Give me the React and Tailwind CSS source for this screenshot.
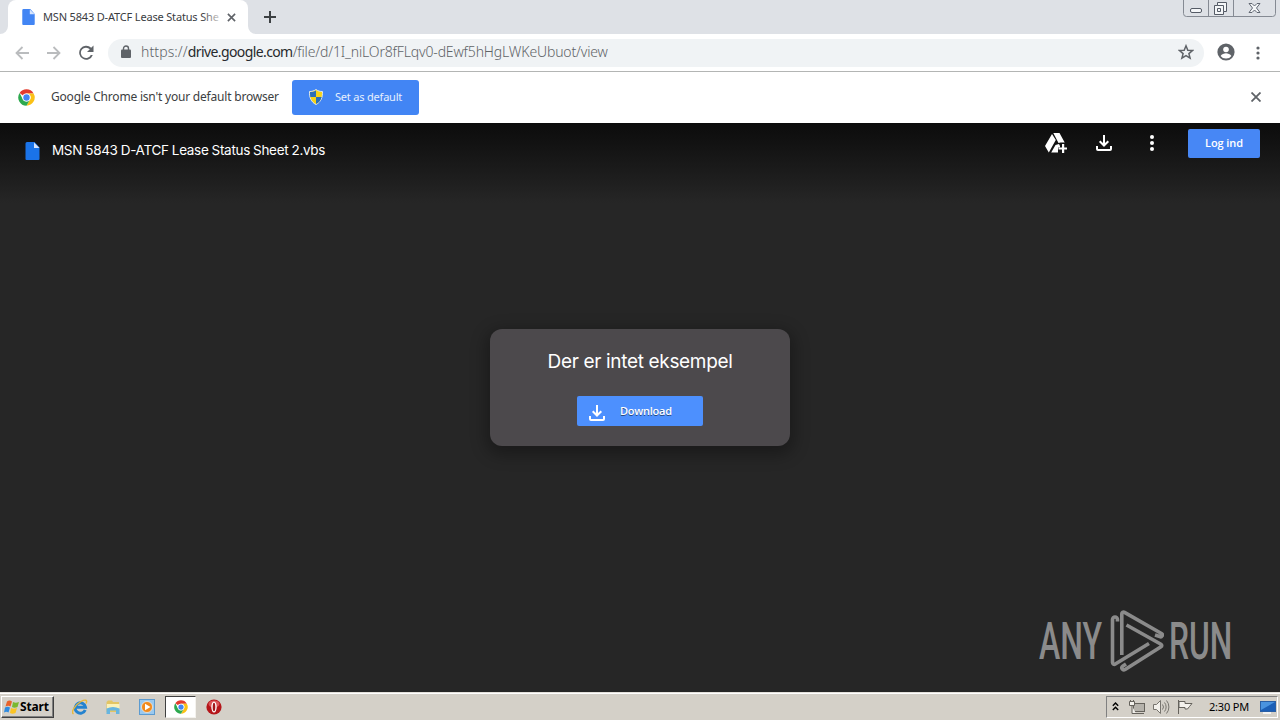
import React from 'react';
import clsx from 'clsx';

const UI = "font-['Noto_Sans',sans-serif]";

function DocIcon({ className, color }) {
  return (
    <svg viewBox="0 0 14 18" className={className}>
      <path d="M1.500 0H9l5 5.500V17a1 1 0 0 1-1 1H1a1 1 0 0 1-1-1V1.500A1.500 1.500 0 0 1 1.500 0z" fill={color} />
      <path d="M8.500 0.500V6H14z" fill="#d6e4fc" />
    </svg>
  );
}

function ChromeIcon({ className }) {
  return (
    <svg viewBox="0 0 48 48" className={className}>
      <circle cx="24" cy="24" r="23" fill="#fff" />
      <path d="M24 1A23 23 0 0 1 44 12.500H24A11.500 11.500 0 0 0 14 18.200L4.500 11.500A23 23 0 0 1 24 1z" fill="#e33b2e" />
      <path d="M44 12.500A23 23 0 0 1 24 47L34 29.800A11.500 11.500 0 0 0 24 12.500z" fill="#fbc116" />
      <path d="M24 47A23 23 0 0 1 4.500 11.500L14 29.800A11.500 11.500 0 0 0 34 29.800z" fill="#2da94f" />
      <circle cx="24" cy="24" r="11.500" fill="#fff" />
      <circle cx="24" cy="24" r="9" fill="#4285f4" />
    </svg>
  );
}

function DownloadIcon({ className }) {
  return (
    <svg viewBox="0 0 16 16" fill="none" stroke="#fff" strokeWidth="2" className={className}>
      <path d="M8 0v10M3.700 6.200 8 10.500l4.300-4.300M1 11v3a1 1 0 0 0 1 1h12a1 1 0 0 0 1-1v-3" />
    </svg>
  );
}

function TabStrip() {
  return (
    <div className="h-[34px] bg-[#dee1e6] flex items-start justify-between">
      <div className="flex">
        <svg viewBox="0 0 8 34" className="w-2 h-[34px]">
          <path d="M8 26v8H0a8 8 0 0 0 8-8z" fill="#fff" />
        </svg>
        <div className="w-60 h-[34px] bg-white rounded-t-lg flex items-center pl-[14px]">
          <DocIcon className="w-[13px] h-4 shrink-0" color="#4285f4" />
          <div className={clsx(UI, 'relative ml-2 w-[175px] h-5 whitespace-nowrap text-[11px] leading-5 tracking-[-0.17px] text-[#3a3c3f]')}>
            MSN 5843 D-ATCF Lease Status She
            <div className="absolute -right-1 top-0 h-5 w-5 bg-linear-to-r from-white/0 to-white/90" />
          </div>
          <svg viewBox="0 0 10 10" className="relative w-[9px] h-[9px] ml-[9px]" stroke="#5f6368" strokeWidth="1.800">
            <path d="m1 1 8 8M9 1 1 9" />
          </svg>
        </div>
        <svg viewBox="0 0 8 34" className="w-2 h-[34px]">
          <path d="M0 26v8h8a8 8 0 0 1-8-8z" fill="#fff" />
        </svg>
        <svg viewBox="0 0 12 12" className="w-3 h-3 ml-2 mt-[11px]" stroke="#3c4043" strokeWidth="2">
          <path d="M6 0v12M0 6h12" />
        </svg>
      </div>
      <svg viewBox="0 0 93 17" className="w-[93px] h-[17px] mr-1" fill="none" stroke="#6f747c">
        <path d="M.5 0v13.500a3 3 0 0 0 3 3h86a3 3 0 0 0 3-3V0M25.500 0v16M50.500 0v16" stroke="#858a93" />
        <rect x="7.500" y="8.500" width="11" height="4" rx="1.500" fill="#f4f6f8" stroke="#555b66" />
        <path d="M34.500 2.500h9v9h-3v3h-9v-9h3z" fill="#f4f6f8" stroke="#555b66" />
        <path d="M34.500 5.500h6v6M34.500 8.500h3v3h-3z" stroke="#555b66" />
        <path d="M66 3.500h3l2.500 2.500L74 3.500h3L73.500 8l3.500 4.500h-3L71.500 10 69 12.500h-3L69.500 8z" fill="#f4f6f8" stroke="#626873" />
      </svg>
    </div>
  );
}

function Toolbar() {
  return (
    <div className="h-[38px] bg-white border-b border-[#b3b5b4] flex items-center">
      <svg viewBox="0 0 14 14" className="w-[14px] h-[14px] ml-[15px]" fill="none" stroke="#babcbe" strokeWidth="1.800">
        <path d="M14 7H1.500M7.500 1l-6 6 6 6" />
      </svg>
      <svg viewBox="0 0 14 14" className="w-[14px] h-[14px] ml-[18px]" fill="none" stroke="#babcbe" strokeWidth="1.800">
        <path d="M0 7h12.500M6.500 1l6 6-6 6" />
      </svg>
      <svg viewBox="0 0 16 16" className="w-4 h-4 ml-[17px]" fill="#5f6368">
        <path d="M13.200 2.800A7 7 0 1 0 14.800 10h-2a5.200 5.200 0 1 1-1-5.800L9 7h6.500V.5z" />
      </svg>
      <div className="ml-[14px] w-[1096px] h-7 rounded-full bg-[#f0f3f5] flex items-center pl-[13px]">
        <svg viewBox="0 0 10 13" className="w-[10px] h-[13px] mb-[2px]">
          <rect y="4.500" width="10" height="8.500" rx="1" fill="#5f6368" />
          <path d="M2.500 5V3.500a2.500 2.500 0 0 1 5 0V5" fill="none" stroke="#5f6368" strokeWidth="1.400" />
        </svg>
        <div className={clsx(UI, 'ml-[10px] pb-[2px] flex-1 whitespace-nowrap font-light text-[14px] leading-6 tracking-[-0.15px] text-[#5f6367]')}>
          <span className="tracking-[0.1px]">https://</span>
          <span className="text-[#27292c] font-normal tracking-[-0.6px]">drive.google.com</span>
          /file/d/1I_niLOr8fFLqv0-dEwf5hHgLWKeUbuot/view
        </div>
        <svg viewBox="0 0 16 16" className="w-4 h-4 mr-[10px] mb-[2px]" fill="none" stroke="#5f6368" strokeWidth="1.500">
          <path d="m8 1.800 1.800 4.400 4.700.3-3.600 3.100 1.200 4.600L8 11.700l-4.100 2.500 1.200-4.600-3.600-3.100 4.700-.3z" />
        </svg>
      </div>
      <svg viewBox="0 0 18 18" className="w-[18px] h-[18px] ml-[13px] mb-[2px]">
        <circle cx="9" cy="9" r="8.600" fill="#5f6368" />
        <circle cx="9" cy="6.500" r="2.800" fill="#fff" />
        <path d="M3.600 13c1-2 3.600-2.800 5.400-2.800s4.400.8 5.400 2.800A6.500 6.500 0 0 1 9 15.600 6.500 6.500 0 0 1 3.600 13z" fill="#fff" />
      </svg>
      <svg viewBox="0 0 4 14" className="w-1 h-[14px] ml-[21px]" fill="#5f6368">
        <circle cx="2" cy="2" r="1.600" />
        <circle cx="2" cy="7" r="1.600" />
        <circle cx="2" cy="12" r="1.600" />
      </svg>
    </div>
  );
}

function DefaultBrowserBar() {
  return (
    <div className="h-[51px] bg-white flex items-center">
      <ChromeIcon className="w-[17px] h-[17px] ml-[18px]" />
      <div className={clsx(UI, 'ml-4 mb-[2px] w-[241px] whitespace-nowrap text-[12px] leading-5 tracking-[-0.2px] text-[#3c3e41]')}>
        Google Chrome isn't your default browser
      </div>
      <div className="w-[127px] h-[35px] rounded-[3px] bg-[#4285f4] flex items-center pl-[17px]">
        <svg viewBox="0 0 14 16" className="w-[14px] h-4 mb-[2px]">
          <path d="M7 .5c2 1.500 4 2 6.500 2 .2 6-1.500 10.500-6.500 13C2 13 .3 8.500.5 2.500 3 2.500 5 2 7 .5z" fill="#f7d417" stroke="#dce6ef" />
          <path d="M7 1.500V8H1.300C1 6 1 4.500 1 3c2.500 0 4-.5 6-1.500zM7 8h5.600c-.7 3.500-2.400 5.500-5.600 7z" fill="#2b6fb8" />
        </svg>
        <div className={clsx(UI, 'ml-3 mb-[2px] whitespace-nowrap text-[11px] leading-5 tracking-[-0.2px] text-[#e6effd]')}>
          Set as default
        </div>
      </div>
      <svg viewBox="0 0 10 10" className="w-[10px] h-[10px] ml-auto mr-[19px] mb-[2px]" stroke="#5f6368" strokeWidth="1.800">
        <path d="m.5.5 9 9M9.500.5l-9 9" />
      </svg>
    </div>
  );
}

function Viewer() {
  return (
    <main className="relative h-[569px] bg-[#262626] flex flex-col font-['Open_Sans',sans-serif]">
      <header className="h-[80px] shrink-0 bg-linear-to-b from-[#0c0c0c] to-[#262626] flex items-start">
        <DocIcon className="w-[15px] h-[18px] ml-[25px] mt-[19px]" color="#1a73e8" />
        <div className="ml-3 mt-[15px] whitespace-nowrap font-['Inter',sans-serif] text-[13.5px] leading-6 tracking-[-0.32px] [word-spacing:-0.3px] text-white">
          MSN 5843 D-ATCF Lease Status Sheet 2.vbs
        </div>
        <svg viewBox="0 0 22 20" className="w-[22px] h-5 ml-auto mt-[10px]" fill="#fff">
          <path d="M7 1 0 13l3.800 6.500L10.800 7zM8.300 0h6.200l5.200 9.500h-4.200l-2 .5zM10.500 12l-4.300 7.500H13v-5h2v-1.500l-1-2z" />
          <path d="M17 11h2.200v3.400h3v2.200h-3V20H17v-3.400h-3.500v-2.200H17z" />
        </svg>
        <DownloadIcon className="w-4 h-4 ml-[29px] mt-[12px]" />
        <svg viewBox="0 0 4 16" className="w-1 h-4 ml-[38px] mt-[12px]" fill="#fff">
          <circle cx="2" cy="2" r="2" />
          <circle cx="2" cy="8" r="2" />
          <circle cx="2" cy="14" r="2" />
        </svg>
        <div className="ml-[34px] mt-[6px] mr-5 w-[72px] h-[29px] rounded-[2px] bg-[#4787f5] flex items-center justify-center text-[11px] font-semibold tracking-[-0.1px] text-white">
          Log ind
        </div>
      </header>

      <section className="mx-auto mt-[126px] w-[300px] h-[117px] rounded-xl bg-[#4c494c] shadow-[0_5px_16px_4px_rgba(0,0,0,0.3)] flex flex-col items-center">
        <div className="mt-[19px] whitespace-nowrap font-['Inter',sans-serif] text-[19px] leading-7 tracking-[-0.33px] text-white">
          Der er intet eksempel
        </div>
        <div className="mt-5 w-[126px] h-[30px] rounded-[2px] bg-[#4d90fe] flex items-center pl-3">
          <DownloadIcon className="w-4 h-4 mt-[3px]" />
          <div className="ml-[15px] text-[11px] font-semibold tracking-[-0.25px] text-white [text-shadow:0_1px_0_rgba(0,0,0,0.5)]">
            Download
          </div>
        </div>
      </section>

      {/* Watermark */}
      <div className="absolute left-[1039px] top-[486px] h-[64px] flex items-center text-[#8b8b8b] font-['Roboto',sans-serif] font-medium text-[52px] leading-none whitespace-nowrap">
        <div className="w-[71px] mt-[2px]">
          <span className="inline-block origin-left scale-x-[0.615]">ANY</span>
        </div>
        <svg viewBox="0 0 54 62" className="w-[54px] h-[62px]" fill="none" stroke="#8b8b8b" strokeWidth="3.6" strokeLinejoin="round">
          <path d="M7.500 11.500V9.500a2.500 2.500 0 0 0-5 0V52.500a1.800 1.800 0 0 0 2.800 1.500L39 33.500" />
          <path d="M11.800 45V4a1.800 1.800 0 0 1 2.700-1.600L51.500 23.500a1.700 1.700 0 0 1-1.800 3L45 25" />
          <path d="M16.500 15 51 34.200a1.500 1.500 0 0 1 0 2.600L15.500 59.300c-3 1.700-5-1.500-2.500-3.300L16 54" />
        </svg>
        <div className="ml-[5px] w-[70px] mt-[2px]">
          <span className="inline-block origin-left scale-x-[0.61]">RUN</span>
        </div>
      </div>
    </main>
  );
}

function Taskbar() {
  return (
    <footer className="h-7 bg-[#d4d0c8] border-t border-[#e4e1db] flex items-center shadow-[inset_0_1px_0_#fff]">
      <div className={clsx(UI, 'ml-[1px] mt-[1px] w-[53px] h-[22px] border border-t-white border-l-white border-b-[#404040] border-r-[#404040] shadow-[inset_-1px_-1px_0_#808080] flex items-center pl-[2px] text-[12px] font-bold text-black')}>
        <svg viewBox="0 0 16 15" className="w-4 h-4 shrink-0">
          <path d="M3 2c2-1.500 3.500-1 5 0L6.500 7c-1.500-1-3-1-5 0z" fill="#e8622a" />
          <path d="M9 2.500c2 1 3.500 1 6 0L13.500 7.500c-2 1-4 1-5.500 0z" fill="#7ab82e" />
          <path d="M1 8c2-1.200 3.500-1 5 0l-1.500 5c-1.500-1-3-1-4.500 0z" fill="#2f8be0" />
          <path d="M7 8.500c2 1 3.500 1 6 0L11.500 13.500c-2 1-4 1-5.500 0z" fill="#fbc423" />
        </svg>
        <span className="tracking-[-0.15px]">Start</span>
      </div>

      {/* Quick launch */}
      <svg viewBox="0 0 16 16" className="w-4 h-4 ml-[18px]" fill="none">
        <path d="M13.200 11A5.200 5.200 0 1 1 13.500 8.200H4.500" stroke="#2583cf" strokeWidth="3" />
        <path d="M1.500 15C-1.500 13 3 6 9 2.500c4-2.300 7-1.800 5 2" stroke="#e9b83a" strokeWidth="1.400" />
      </svg>
      <svg viewBox="0 0 16 16" className="w-4 h-4 ml-[17px]">
        <path d="M1.500 3 3 1.500h4L8 3h6v10H1.500z" fill="#e3c564" />
        <path d="M2 5h12.500v5H2z" fill="#fbf1b8" />
        <path d="M1.500 9.500q6.500-3 13 0V15H11v-3.500H5V15H1.500z" fill="#67b5e0" />
      </svg>
      <svg viewBox="0 0 16 16" className="w-4 h-4 ml-[18px]">
        <rect x=".5" y=".5" width="15" height="15" fill="#9ac9ef" stroke="#5c9bd0" />
        <circle cx="8" cy="8" r="5.500" fill="#f08a1d" stroke="#fff" strokeWidth=".6" />
        <path d="M6 4.700 11.500 8 6 11.300z" fill="#fff" />
      </svg>
      <div className="ml-[10px] mt-[1px] w-[31px] h-[22px] bg-white border border-t-[#404040] border-l-[#404040] border-b-[#f4f2ee] border-r-[#f4f2ee] flex items-center justify-center">
        <ChromeIcon className="w-[14px] h-[14px]" />
      </div>
      <svg viewBox="0 0 16 16" className="w-4 h-4 ml-[10px]">
        <circle cx="8" cy="8" r="7.600" fill="#b5161a" />
        <ellipse cx="8" cy="5" rx="5.500" ry="3.500" fill="#dd5558" />
        <ellipse cx="8" cy="8" rx="2.700" ry="5.500" fill="#fff" />
        <ellipse cx="8" cy="8" rx="1.300" ry="4.300" fill="#a3171a" />
      </svg>

      <div className="ml-auto mr-[2px] mt-[1px] w-[172px] h-[22px] border border-t-[#808080] border-l-[#808080] border-b-white border-r-white flex items-center">
        <svg viewBox="0 0 7 9" className="w-[7px] h-[9px] ml-[5px] mb-[2px]" fill="none" stroke="#000" strokeWidth="1.400">
          <path d="m.8 3.700 2.700-2.700 2.700 2.700M.8 8l2.700-2.700L6.200 8" />
        </svg>
        <svg viewBox="0 0 16 15" className="w-4 h-[15px] ml-[10px]" stroke="#65625c">
          <rect x="4.500" y="3.500" width="11" height="8" fill="#b5b2ab" />
          <path d="M6 13.500h9" />
          <path d="M3 6v7.500h4M.5 1.500h5v4h-5z" fill="#f3f1ec" />
          <path d="M1.500 0v2M4.500 0v2" />
        </svg>
        <svg viewBox="0 0 17 14" className="w-[17px] h-[14px] ml-2" fill="none" stroke="#77746e">
          <path d="M.5 4.500h3l4-4v13l-4-4h-3z" fill="#f3f1ec" />
          <path d="M9.500 4.500a4 4 0 0 1 0 5M11.500 2.500a7 7 0 0 1 0 9M13.500.5a10 10 0 0 1 0 13" />
        </svg>
        <svg viewBox="0 0 16 14" className="w-4 h-[14px] ml-[7px]" fill="#f3f1ec" stroke="#65625c">
          <path d="M1.500 0v14" />
          <path d="M2 1.500h6v2h7L12.500 6.500 10.500 9H8V7.500H2z" />
        </svg>
        <div className={clsx(UI, 'ml-4 w-[42px] whitespace-nowrap text-[11px] leading-4 tracking-[-0.2px] text-black')}>2:30 PM</div>
        <svg viewBox="0 0 16 13" className="w-4 h-[13px] ml-[9px]">
          <rect x=".5" y=".5" width="15" height="10" fill="#1c5fb6" stroke="#2a5fa5" />
          <path d="M1 1h14L1 9z" fill="#4a93df" />
          <path d="M3 12h8" stroke="#fff" strokeWidth="1.500" />
        </svg>
      </div>
    </footer>
  );
}

export default function App() {
  return (
    <div className="w-[1280px] h-[720px] overflow-hidden flex flex-col bg-white">
      <TabStrip />
      <Toolbar />
      <DefaultBrowserBar />
      <Viewer />
      <Taskbar />
    </div>
  );
}
